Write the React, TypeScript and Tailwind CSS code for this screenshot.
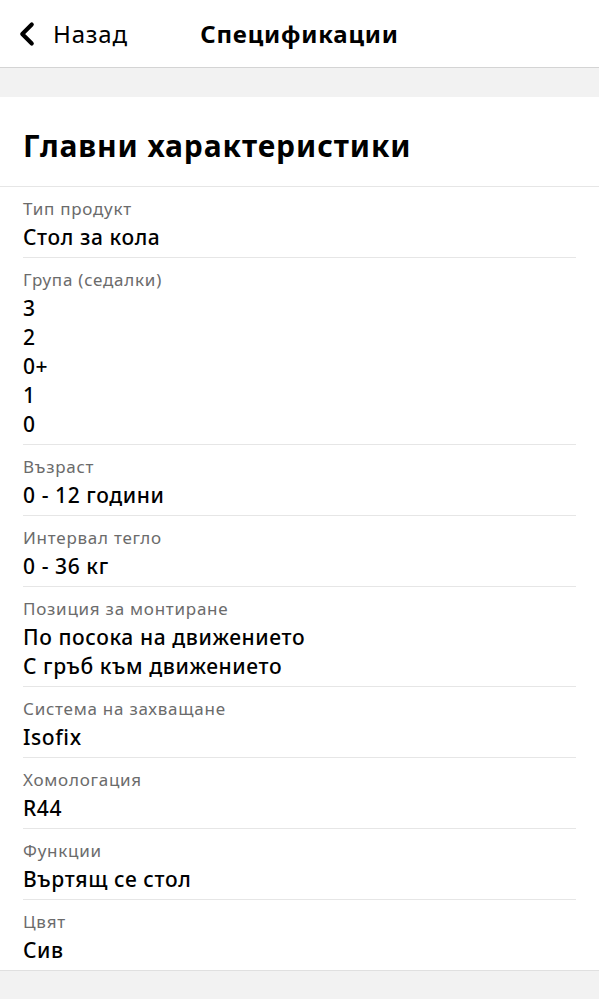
import { ChevronLeft } from "lucide-react";

type Spec = {
  label: string;
  values: string[];
};

const specs: Spec[] = [
  { label: "Тип продукт", values: ["Стол за кола"] },
  { label: "Група (седалки)", values: ["3", "2", "0+", "1", "0"] },
  { label: "Възраст", values: ["0 - 12 години"] },
  { label: "Интервал тегло", values: ["0 - 36 кг"] },
  { label: "Позиция за монтиране", values: ["По посока на движението", "С гръб към движението"] },
  { label: "Система на захващане", values: ["Isofix"] },
  { label: "Хомологация", values: ["R44"] },
  { label: "Функции", values: ["Въртящ се стол"] },
  { label: "Цвят", values: ["Сив"] },
];

function SpecRow({ spec, last }: { spec: Spec; last: boolean }) {
  return (
    <div className={`pt-2 pb-[5px] ${last ? "" : "border-b border-[#e6e6e6]"}`}>
      <p className="text-[17px] leading-[28px] tracking-[0.75px] text-[#6b6b6b]">{spec.label}</p>
      {spec.values.map((v) => (
        <p key={v} className="text-[21px] leading-[29px] font-medium tracking-[0.6px] text-black">{v}</p>
      ))}
    </div>
  );
}

export default function App() {
  return (
    <div className="min-h-[999px] bg-[#f2f2f2] font-['Noto_Sans',sans-serif]">
      <header className="relative flex h-[68px] items-center border-b border-[#d4d4d4] bg-white">
        <button className="flex items-center gap-[7px] pl-[8px] text-[24px] tracking-[0.8px] text-black">
          <ChevronLeft size={38} strokeWidth={2.6} />
          <span>Назад</span>
        </button>
        <h1 className="absolute left-1/2 -translate-x-1/2 text-[24px] font-bold tracking-[0.8px] text-black">Спецификации</h1>
      </header>

      <div className="h-[29px]" />

      <section className="border-b border-[#e0e0e0] bg-white">
        <h2 className="flex h-[90px] items-center border-b border-[#e6e6e6] px-[23px] pt-2 text-[30px] font-bold tracking-[0.9px] text-black">
          Главни характеристики
        </h2>
        <div className="px-[23px]">
          {specs.map((s, i) => (
            <SpecRow key={s.label} spec={s} last={i === specs.length - 1} />
          ))}
        </div>
      </section>
    </div>
  );
}
